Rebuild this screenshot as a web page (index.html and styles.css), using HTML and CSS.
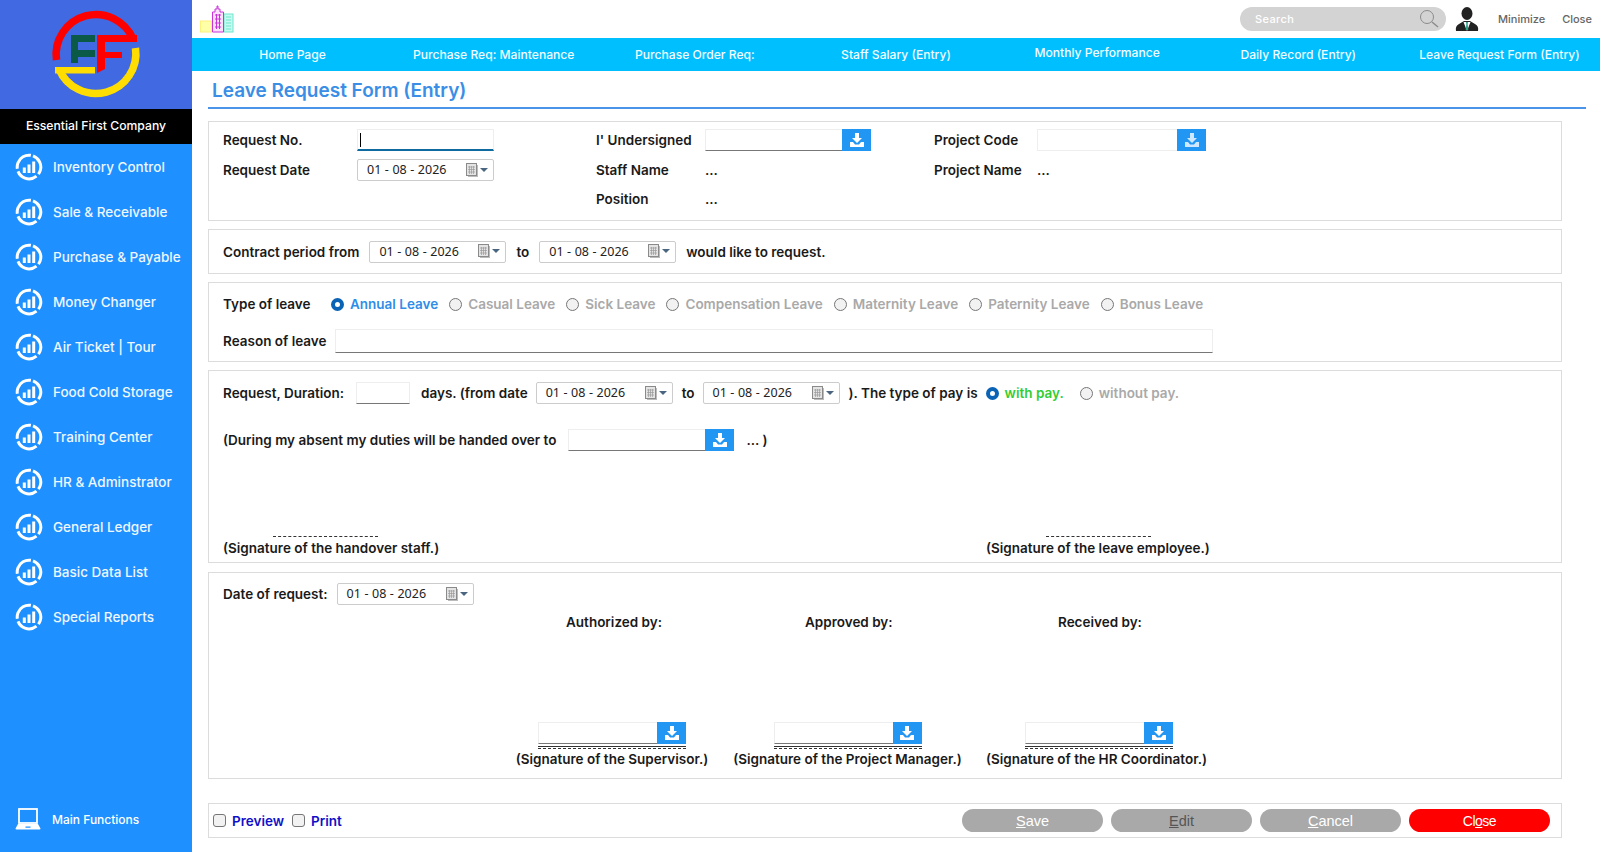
FILE: index.html
```html
<!DOCTYPE html>
<html lang="en">
<head>
<meta charset="UTF-8" />
<title>Leave Request Form (Entry)</title>
<link rel="stylesheet" href="styles.css">
</head>
<body>

<svg class="sprite" width="0" height="0">
  <symbol id="i-chart" viewBox="0 0 28 28">
    <circle cx="14" cy="14" r="11.8" fill="none" stroke="currentColor" stroke-width="3" stroke-dasharray="22 2.700" transform="rotate(-70 14 14)"/>
    <rect x="7.800" y="14.500" width="3" height="5.500" fill="currentColor"/>
    <rect x="12.500" y="11.500" width="3" height="8.500" fill="currentColor"/>
    <rect x="17.200" y="8.500" width="3" height="11.500" fill="currentColor"/>
  </symbol>
  <symbol id="i-down" viewBox="0 0 16 16">
    <path d="M6 1h4v5h3l-5 5-5-5h3z" fill="currentColor"/>
    <path d="M1 10h3l2 2.500h4l2-2.500h3v5H1z" fill="currentColor"/>
  </symbol>
  <symbol id="i-cal" viewBox="0 0 30 14">
    <rect x="2" y="2" width="10" height="12" fill="#bbb"/>
    <rect x=".5" y=".5" width="10" height="12" fill="#e4e4e4" stroke="#8a8a8a"/>
    <path d="M2 4h7M2 6.500h7M2 9h7M3.500 3v8M5.500 3v8M7.500 3v8" stroke="#9a9a9a" stroke-width=".7"/>
    <path d="M14 5h8l-4 4z" fill="#4a6580"/>
  </symbol>
</svg>

<div class="app">
  <aside class="sidebar">
    <div class="brand">
      <svg width="100" height="100" viewBox="0 0 100 100">
        <g fill="none" stroke-width="7.500">
          <path d="M10.500 56A40 40 0 0 1 87 35" stroke="#f00"/>
          <path d="M13 65A40 40 0 0 0 89.500 44" stroke="#ffdd00"/>
        </g>
        <rect x="9" y="63" width="40" height="6.500" fill="#ffdd00"/>
        <path d="M25 31h24v7H32v8h17v7H32v6h-7z" fill="#0b5a48"/>
        <path d="M51 31h40v7H59v10h17v6H59v11l-8 4z" fill="#f00"/>
      </svg>
    </div>
    <div class="company">Essential First Company</div>
    <nav class="menu">
      <a class="menu__item"><svg class="menu__icon"><use href="#i-chart"/></svg>Inventory Control</a>
      <a class="menu__item"><svg class="menu__icon"><use href="#i-chart"/></svg>Sale &amp; Receivable</a>
      <a class="menu__item"><svg class="menu__icon"><use href="#i-chart"/></svg>Purchase &amp; Payable</a>
      <a class="menu__item"><svg class="menu__icon"><use href="#i-chart"/></svg>Money Changer</a>
      <a class="menu__item"><svg class="menu__icon"><use href="#i-chart"/></svg>Air Ticket | Tour</a>
      <a class="menu__item"><svg class="menu__icon"><use href="#i-chart"/></svg>Food Cold Storage</a>
      <a class="menu__item"><svg class="menu__icon"><use href="#i-chart"/></svg>Training Center</a>
      <a class="menu__item"><svg class="menu__icon"><use href="#i-chart"/></svg>HR &amp; Adminstrator</a>
      <a class="menu__item"><svg class="menu__icon"><use href="#i-chart"/></svg>General Ledger</a>
      <a class="menu__item"><svg class="menu__icon"><use href="#i-chart"/></svg>Basic Data List</a>
      <a class="menu__item"><svg class="menu__icon"><use href="#i-chart"/></svg>Special Reports</a>
    </nav>
    <a class="main-fn">
      <svg width="26" height="24" viewBox="0 0 26 24">
        <rect x="4" y="2" width="18" height="14" fill="none" stroke="#fff" stroke-width="1.800"/>
        <path d="M3 17h20l2.500 4.500q0 1-1 1H1.500q-1 0-1-1zM10.500 19.500v1.300h5v-1.300z" fill="#fff" fill-rule="evenodd"/>
      </svg>
      Main Functions
    </a>
  </aside>

  <div class="main">
    <header class="topbar">
      <svg class="town" width="34" height="28" viewBox="0 0 34 28">
        <rect x=".5" y="16" width="11" height="11" fill="#ffffa8" stroke="#fff07a"/>
        <rect x="24" y="9" width="9" height="18" fill="#c8fbef" stroke="#6fe6d0"/>
        <path d="M26 12h5M26 15h5M26 18h5M26 21h5M26 24h5" stroke="#6fe6d0"/>
        <path d="M12.500 27V7H15V4h2V1h1v3h2v3h3.500v20z" fill="#fbe0fb" stroke="#c832d8"/>
        <path d="M15 10h6M15 14h6M15 18h6M15 22h6M16.500 9v15M19.500 9v15" stroke="#c832d8"/>
      </svg>
      <div class="search">
        <span class="search__text">Search</span>
        <svg width="20" height="20" viewBox="0 0 20 20">
          <circle cx="8" cy="8" r="6.500" fill="none" stroke="#8b8b8b"/>
          <path d="M13 13l6 5" stroke="#8b8b8b" stroke-width="1.500"/>
        </svg>
      </div>
      <svg class="avatar" width="24" height="25" viewBox="0 0 24 25">
        <ellipse cx="12" cy="6.500" rx="5.500" ry="6.500" fill="#222"/>
        <path d="M1 24q-1-5 3-7l5-3h6l5 3q4 2 3 7z" fill="#222"/>
        <path d="M8.500 15l3.500 9 3.500-9z" fill="#fff"/>
        <path d="M11 15h2l-.3 2 .6 6h-2.600l.6-6z" fill="#2fa58e"/>
      </svg>
      <a class="topbar__link topbar__link--min">Minimize</a>
      <a class="topbar__link">Close</a>
    </header>

    <nav class="tabs">
      <a class="tabs__item">Home Page</a>
      <a class="tabs__item">Purchase Req: Maintenance</a>
      <a class="tabs__item">Purchase Order Req:</a>
      <a class="tabs__item">Staff Salary (Entry)</a>
      <a class="tabs__item tabs__item--up">Monthly Performance</a>
      <a class="tabs__item">Daily Record (Entry)</a>
      <a class="tabs__item">Leave Request Form (Entry)</a>
    </nav>

    <h1 class="page-title">Leave Request Form (Entry)</h1>

    <form class="form">
      <!-- Cabecera -->
      <section class="panel panel--head">
        <label>Request No.</label>
        <div class="field field--focus"><span class="caret"></span></div>
        <span></span>
        <label>I' Undersigned</label>
        <div class="lookup"><div class="field"></div><button type="button" class="lookup__btn"><svg><use href="#i-down"/></svg></button></div>
        <span></span>
        <label>Project Code</label>
        <div class="lookup lookup--pale"><div class="field"></div><button type="button" class="lookup__btn"><svg><use href="#i-down"/></svg></button></div>

        <label>Request Date</label>
        <div class="date">01 - 08 - 2026<svg><use href="#i-cal"/></svg></div>
        <span></span>
        <label>Staff Name</label>
        <span class="dots">...</span>
        <span></span>
        <label>Project Name</label>
        <span class="dots">...</span>

        <span></span><span></span><span></span>
        <label>Position</label>
        <span class="dots">...</span>
      </section>

      <section class="panel panel--contract">
        <label>Contract period from</label>
        <div class="date">01 - 08 - 2026<svg><use href="#i-cal"/></svg></div>
        <label>to</label>
        <div class="date">01 - 08 - 2026<svg><use href="#i-cal"/></svg></div>
        <label>would like to request.</label>
      </section>

      <section class="panel panel--leave">
        <div class="row-types">
          <label class="row-types__title">Type of leave</label>
          <label class="opt opt--on"><input type="radio" name="t" checked>Annual Leave</label>
          <label class="opt"><input type="radio" name="t">Casual Leave</label>
          <label class="opt"><input type="radio" name="t">Sick Leave</label>
          <label class="opt"><input type="radio" name="t">Compensation Leave</label>
          <label class="opt"><input type="radio" name="t">Maternity Leave</label>
          <label class="opt"><input type="radio" name="t">Paternity Leave</label>
          <label class="opt"><input type="radio" name="t">Bonus Leave</label>
        </div>
        <div class="row-reason">
          <label>Reason of leave</label>
          <div class="field field--reason"></div>
        </div>
      </section>

      <section class="panel panel--duration">
        <div class="row-duration">
          <label>Request, Duration:</label>
          <div class="field field--days"></div>
          <label>days. (from date</label>
          <div class="date">01 - 08 - 2026<svg><use href="#i-cal"/></svg></div>
          <label>to</label>
          <div class="date">01 - 08 - 2026<svg><use href="#i-cal"/></svg></div>
          <label>). The type of pay is</label>
          <label class="opt opt--pay"><input type="radio" name="p" checked>with pay.</label>
          <label class="opt"><input type="radio" name="p">without pay.</label>
        </div>
        <div class="row-handed">
          <label>(During my absent my duties will be handed over to</label>
          <div class="lookup lookup--hand"><div class="field"></div><button type="button" class="lookup__btn"><svg><use href="#i-down"/></svg></button></div>
          <label>... )</label>
        </div>
        <div class="row-sign">
          <div class="sign"><span class="sign__line"></span><label>(Signature of the handover staff.)</label></div>
          <div class="sign sign--emp"><span class="sign__line"></span><label>(Signature of the leave employee.)</label></div>
        </div>
      </section>

      <section class="panel panel--approve">
        <div class="row-date">
          <label>Date of request:</label>
          <div class="date">01 - 08 - 2026<svg><use href="#i-cal"/></svg></div>
        </div>
        <div class="row-by">
          <label>Authorized by:</label>
          <label>Approved by:</label>
          <label>Received by:</label>
        </div>
        <div class="row-signers">
          <div class="signer signer--a">
            <div class="lookup lookup--sign"><div class="field"></div><button type="button" class="lookup__btn"><svg><use href="#i-down"/></svg></button></div>
            <span class="signer__line"></span>
            <label>(Signature of the Supervisor.)</label>
          </div>
          <div class="signer signer--b">
            <div class="lookup lookup--sign"><div class="field"></div><button type="button" class="lookup__btn"><svg><use href="#i-down"/></svg></button></div>
            <span class="signer__line"></span>
            <label>(Signature of the Project Manager.)</label>
          </div>
          <div class="signer signer--c">
            <div class="lookup lookup--sign"><div class="field"></div><button type="button" class="lookup__btn"><svg><use href="#i-down"/></svg></button></div>
            <span class="signer__line"></span>
            <label>(Signature of the HR Coordinator.)</label>
          </div>
        </div>
      </section>

      <section class="panel panel--actions">
        <label class="check"><input type="checkbox">Preview</label>
        <label class="check"><input type="checkbox">Print</label>
        <div class="actions">
          <button type="button" class="btn"><u>S</u>ave</button>
          <button type="button" class="btn btn--dark"><u>E</u>dit</button>
          <button type="button" class="btn"><u>C</u>ancel</button>
          <button type="button" class="btn btn--close">Cl<u>o</u>se</button>
        </div>
      </section>
    </form>
  </div>
</div>

</body>
</html>
```
FILE: styles.css
```css
:root {
  --blue: #1e90ff;
  --sky: #00bfff;
  --line: #dcdcdc;
  --label: #1a1a1a;
  --muted: #a9a9a9;
}

* {
  box-sizing: border-box;
}

body {
  margin: 0;
  font-family: Inter, "Liberation Sans", sans-serif;
  font-size: 13.5px;
  color: var(--label);
  background: #fff;
  overflow: hidden;
}

.sprite {
  position: absolute;
}

.app {
  display: flex;
  height: 852px;
}

/* Sidebar */
.sidebar {
  width: 192px;
  flex: none;
  display: flex;
  flex-direction: column;
  background: var(--blue);
  color: #fff;
}

.brand {
  height: 109px;
  padding-bottom: 2px;
  display: flex;
  justify-content: center;
  align-items: center;
  background: #4169e1;
}

.company {
  height: 35px;
  line-height: 34px;
  text-align: center;
  background: #000;
  font-weight: 500;
  font-size: 12.2px;
}

.menu {
  display: flex;
  flex-direction: column;
}

.menu__item {
  height: 45px;
  display: flex;
  align-items: center;
  gap: 10px;
  padding-left: 15px;
  font-size: 13.5px;
  font-weight: 500;
  white-space: nowrap;
  color: #eef7ff;
}

.menu__icon {
  width: 28px;
  height: 28px;
  flex: none;
  color: #fff;
}

.main-fn {
  margin-top: auto;
  height: 36px;
  margin-bottom: 15px;
  display: flex;
  align-items: center;
  gap: 11px;
  padding-left: 15px;
  font-size: 12px;
  font-weight: 500;
}

/* Cabecera */
.main {
  flex: 1;
  min-width: 0;
}

.topbar {
  height: 38px;
  display: flex;
  align-items: center;
  padding-left: 8px;
  font-size: 11px;
}

.town {
  margin-right: auto;
}

.search {
  width: 206px;
  height: 24px;
  display: flex;
  align-items: center;
  justify-content: space-between;
  padding: 0 7px 0 15px;
  background: #d3d3d3;
  border-radius: 12px;
}

.search__text {
  color: #fff;
  font-weight: 500;
  font-size: 11px;
  letter-spacing: .4px;
}

.avatar {
  margin-left: 9px;
}

.topbar__link {
  color: #666;
  font-weight: 500;
  margin-right: 8px;
  margin-left: 9px;
}

.topbar__link--min {
  margin-left: 19px;
}

.tabs {
  height: 33px;
  padding-bottom: 1px;
  display: grid;
  grid-template-columns: repeat(7, 1fr);
  align-items: center;
  background: var(--sky);
}

.tabs__item {
  text-align: center;
  color: #f2fbff;
  font-size: 12.1px;
  font-weight: 500;
  white-space: nowrap;
}

.tabs__item--up {
  margin-bottom: 4px;
}

.page-title {
  margin: 0 14px 0 16px;
  height: 38px;
  line-height: 39px;
  padding-left: 4px;
  font-size: 19px;
  font-weight: 600;
  color: #3a8ee6;
  border-bottom: 2px solid #4a94ea;
}

/* Formulario */
.form {
  display: flex;
  flex-direction: column;
  margin: 12px 38px 0 16px;
}

.panel {
  border: 1px solid var(--line);
  padding-left: 14px;
  margin-bottom: 8px;
  flex: none;
}

label {
  font-weight: 600;
  white-space: nowrap;
}

.dots {
  font-weight: 600;
}

.field {
  height: 22px;
  border: 1px solid #eee;
  border-bottom-color: #777;
  background: #fff;
}

.field--focus {
  position: relative;
  border-bottom: 2px solid #0f6aa0;
}

.caret {
  position: absolute;
  left: 2px;
  top: 3px;
  width: 1px;
  height: 14px;
  background: #000;
}

.date {
  width: 137px;
  height: 22px;
  flex: none;
  display: flex;
  align-items: center;
  justify-content: space-between;
  padding: 0 0 1px 9px;
  border: 1px solid #ccc;
  border-radius: 2px;
  font-family: "Noto Sans", sans-serif;
  font-size: 12.5px;
  word-spacing: .3px;
  color: #222;
}

.date svg {
  width: 30px;
  height: 14px;
  margin-right: -3px;
}

.lookup {
  display: flex;
  height: 22px;
}

.lookup .field {
  flex: 1;
  border-right: 0;
}

.lookup__btn {
  width: 29px;
  height: 22px;
  flex: none;
  padding: 0;
  border: 0;
  display: flex;
  align-items: center;
  justify-content: center;
  background: #2196f3;
  color: #fff;
}

.lookup__btn svg {
  width: 16px;
  height: 16px;
}

.lookup--pale .field {
  border-bottom-color: #eee;
}

.lookup--pale .lookup__btn {
  color: #cfe8ff;
}

.panel--head {
  height: 100px;
  display: grid;
  grid-template-columns: 134px 137px 102px 109px 166px 63px 103px 169px;
  grid-template-rows: 30px 30px 28px;
  align-items: center;
  align-content: start;
  padding-top: 3px;
}

.panel--contract {
  height: 45px;
  display: flex;
  align-items: center;
  gap: 10px;
}

.panel--leave {
  height: 80px;
}

.row-types {
  height: 42px;
  display: flex;
  align-items: center;
}

.row-types__title {
  width: 108px;
}

.opt {
  display: inline-flex;
  align-items: center;
  gap: 6px;
  color: var(--muted);
  margin-right: 11px;
}

.opt input,
.check input {
  appearance: none;
  width: 13px;
  height: 13px;
  margin: 0;
  flex: none;
  background: #f2f2f2;
  border: 1px solid #767676;
}

.opt input {
  border-radius: 50%;
}

.opt input:checked {
  background: #fff;
  border: 4px solid #0b63b5;
}

.opt--on {
  color: #2f8de8;
}

.opt--pay {
  color: #32cd32;
}

.row-reason {
  display: flex;
  align-items: center;
  gap: 8px;
  height: 24px;
  margin-top: 4px;
}

.field--reason {
  width: 878px;
  height: 24px;
}

.panel--duration {
  height: 193px;
  margin-bottom: 9px;
  padding-top: 11px;
}

.row-duration {
  display: flex;
  align-items: center;
  height: 22px;
}

.field--days {
  width: 54px;
  margin: 0 11px 0 12px;
}

.row-duration .date {
  margin: 0 9px 0 8px;
}

.row-duration .opt {
  margin-left: 8px;
}

.row-duration .opt--pay {
  margin-right: 8px;
}

.row-handed {
  display: flex;
  align-items: center;
  height: 24px;
  margin-top: 24px;
}

.lookup--hand {
  width: 166px;
  margin: 0 12px;
}

.row-sign {
  display: grid;
  grid-template-columns: 763px auto;
  margin-top: 84px;
}

.sign {
  display: flex;
  flex-direction: column;
}

.sign__line {
  width: 105px;
  height: 1px;
  margin: 0 0 3px 50px;
  border-top: 1px dashed #333;
}

.sign--emp .sign__line {
  margin-left: 60px;
}

.panel--approve {
  height: 207px;
  margin-bottom: 9px;
  padding-top: 10px;
}

.row-date {
  display: flex;
  align-items: center;
  gap: 9px;
  height: 22px;
}

.row-by {
  display: grid;
  grid-template-columns: 239px 253px auto;
  padding-left: 343px;
  margin-top: 9px;
}

.row-signers {
  display: flex;
  margin-top: 92px;
}

.signer {
  display: flex;
  flex-direction: column;
  align-items: center;
}

.lookup--sign {
  width: 148px;
}

.signer__line {
  width: 148px;
  border-top: 1px solid #333;
  border-bottom: 1px dashed #333;
  height: 3px;
  margin: 2px 0 2px;
}

.signer--a {
  width: 190px;
  margin-left: 294px;
}

.signer--b {
  width: 227px;
  margin-left: 27px;
}

.signer--c {
  width: 221px;
  margin-left: 25px;
}

.signer--c .lookup,
.signer--c .signer__line {
  margin-left: 5px;
}

.panel--actions {
  height: 35px;
  margin: 15px 0 0;
  padding: 0 11px 0 4px;
  display: flex;
  align-items: center;
  gap: 8px;
}

.check {
  display: inline-flex;
  align-items: center;
  gap: 6px;
  color: #1010c8;
}

.check input {
  border-radius: 3px;
}

.actions {
  margin-left: auto;
  display: flex;
  gap: 8px;
}

.btn {
  width: 141px;
  height: 23px;
  padding: 0;
  border: 0;
  border-radius: 12px;
  background: var(--muted);
  color: #fff;
  font-family: "Liberation Sans Narrow", "Liberation Sans", sans-serif;
  font-size: 14.5px;
}

.btn--dark {
  color: #555;
}

.btn--close {
  background: #f00;
  font-size: 14px;
  letter-spacing: -.5px;
}
```
